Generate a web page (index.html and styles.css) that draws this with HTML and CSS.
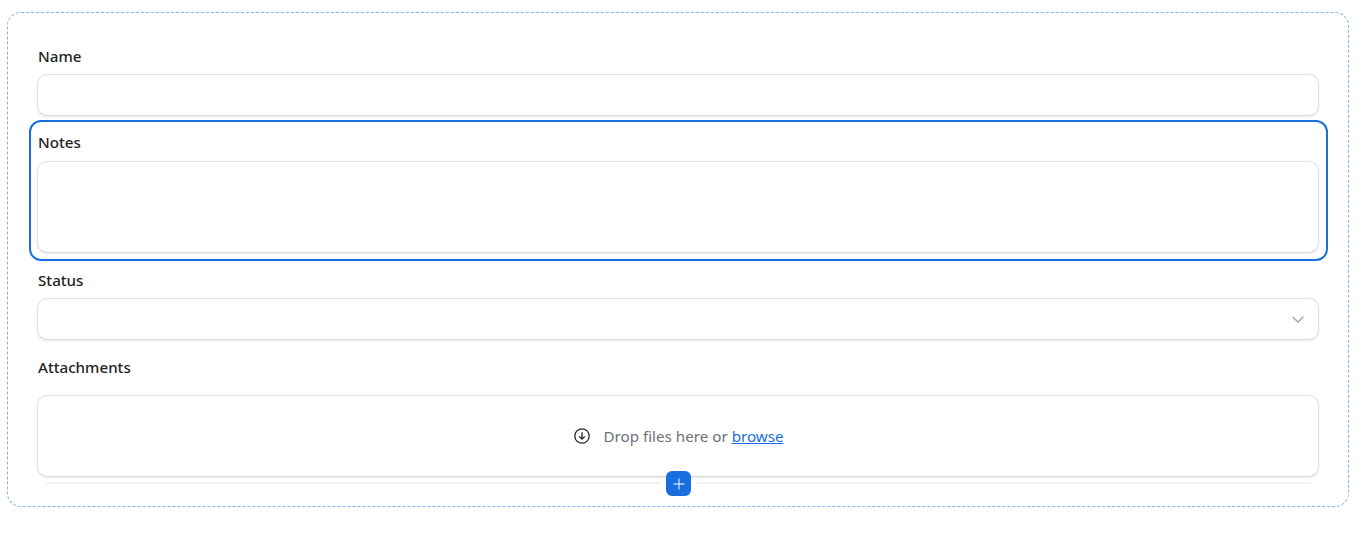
FILE: index.html
```html
<!DOCTYPE html>
<html lang="en">
<head>
<meta charset="utf-8">
<title>Form</title>
<link rel="stylesheet" href="styles.css">
</head>
<body>
<form class="canvas">
  <div class="field field-name">
    <label class="label">Name</label>
    <div class="input input-text"></div>
  </div>
  <div class="field field-notes is-selected">
    <label class="label">Notes</label>
    <div class="input input-area"></div>
  </div>
  <div class="field field-status">
    <label class="label">Status</label>
    <div class="input input-text select">
      <svg class="chevron" viewBox="0 0 12 7" width="12" height="7" aria-hidden="true"><path d="M.6.8L6 6 11.4.8" fill="none" stroke="#a3a3ab" stroke-width="1.4"/></svg>
    </div>
  </div>
  <div class="field field-files">
    <label class="label">Attachments</label>
    <div class="input dropzone">
      <svg class="drop-icon" viewBox="0 0 16 16" width="16" height="16" aria-hidden="true"><circle cx="8" cy="8" r="7.2" fill="none" stroke="#242424" stroke-width="1.3"/><path d="M8 4.2v7M5.2 8.4L8 11.2l2.8-2.8" fill="none" stroke="#242424" stroke-width="1.3"/></svg>
      <span class="drop-text">Drop files here or <a class="browse" href="#">browse</a></span>
    </div>
  </div>
  <div class="add-row">
    <span class="rule"></span>
    <span class="rule"></span>
    <button class="add" type="button" aria-label="Add">
      <svg viewBox="0 0 12 12" width="12" height="12" aria-hidden="true"><path d="M6 .5v11M.5 6h11" fill="none" stroke="#fff" stroke-width="1"/></svg>
    </button>
  </div>
</form>
</body>
</html>
```
FILE: styles.css
```css
* { box-sizing: border-box; }
html, body { margin: 0; background: #fff; }
body { padding: 12px 19px 0 7px; font-family: "Noto Sans", "Open Sans", sans-serif; color: #242424; }
.canvas {
  position: relative;
  width: 1342px;
  height: 495px;
  padding: 31px 20px 0 21px;
  border: 1px dashed #7fb3f2;
  border-radius: 14px;
}
.field { padding: 0 7px 0 6px; border: 2px solid transparent; border-radius: 12px; }
.label { display: block; font-size: 15.15px; font-weight: 500; line-height: 20px; padding-left: 1px; color: #242424; }
.input { background: #fff; border: 1px solid #e3e3e3; border-bottom-color: #d9d9d9; border-radius: 10px; box-shadow: 0 1px 3px rgba(0,0,0,.09); }
.input-text { height: 42px; margin-top: 8px; }
.field-notes { margin-top: 2px; height: 141px; padding-top: 10px; }
.field-notes.is-selected { border-color: #1a6fe0; }
.input-area { height: 92px; margin-top: 9px; }
.field-status { margin-top: 7px; }
.select { display: flex; align-items: center; justify-content: flex-end; padding-right: 14px; }
.field-files { margin-top: 13px; }
.dropzone { height: 82px; margin-top: 18px; padding-left: 2px; display: flex; align-items: center; justify-content: center; gap: 13px; }
.drop-text { font-size: 15.2px; color: #70707a; line-height: 20px; }
.browse { color: #1a6fe0; text-decoration: underline; }
.drop-icon { display: block; }
.add-row { position: relative; display: flex; gap: 35px; margin: 3px 17px 0 17px; height: 2px; }
.rule { flex: 1; background: #f2f2f6; }
.add {
  position: absolute;
  left: 50%;
  top: -11px;
  width: 25px;
  height: 25px;
  margin-left: -12.5px;
  padding: 0;
  display: flex;
  align-items: center;
  justify-content: center;
  background: #1a6fe0;
  border: 0;
  border-radius: 6px;
}
```
